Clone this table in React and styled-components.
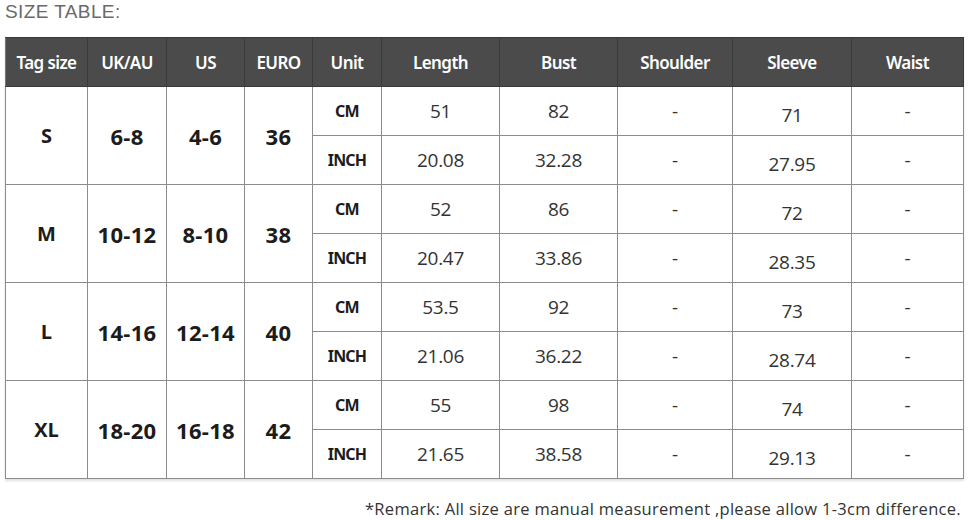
import React from "react";
import styled, { createGlobalStyle } from "styled-components";

const GlobalStyle = createGlobalStyle`
  html, body {
    margin: 0;
    padding: 0;
    background: #ffffff;
  }
`;

const Page = styled.div`
  width: 970px;
  height: 520px;
  padding: 0 7px 0 5px;
  box-sizing: border-box;
  display: flex;
  flex-direction: column;
  overflow: hidden;
`;

const Title = styled.div`
  font-family: "Liberation Sans", Arial, sans-serif;
  font-size: 19px;
  color: #6a6a6a;
  letter-spacing: 0.4px;
  height: 38px;
  line-height: 24px;
`;

const Table = styled.table`
  border-collapse: collapse;
  table-layout: fixed;
  width: 958px;
  box-shadow: 0 2px 2px rgba(0, 0, 0, 0.12);
`;

const HeadCell = styled.th`
  background: #4b4b4b;
  color: #ffffff;
  font-family: "Noto Sans", "Liberation Sans", sans-serif;
  font-weight: 600;
  font-size: 17px;
  letter-spacing: -0.6px;
  height: 48px;
  padding: 0;
  border: 1.5px solid #3a3a3a;
  border-left-color: #777;
  text-align: center;
`;

const SizeCell = styled.td`
  border: 1.5px solid #8c8c8c;
  text-align: center;
  padding: 0;
  font-family: "Open Sans", "Liberation Sans", sans-serif;
  font-weight: 700;
  font-size: ${(p) => (p.$big ? "22px" : "20px")};
  letter-spacing: ${(p) => (p.$big ? "0.3px" : "0")};
  color: #1c1c1c;
`;

const UnitCell = styled.td`
  border: 1.5px solid #8c8c8c;
  text-align: center;
  padding: 0;
  height: 48px;
  font-family: "Noto Sans", "Liberation Sans", sans-serif;
  font-weight: 700;
  font-size: 16px;
  letter-spacing: -0.8px;
  color: #1c1c1c;
`;

const ValueCell = styled.td`
  border: 1.5px solid #8c8c8c;
  text-align: center;
  padding: ${(p) => (p.$low ? "8px 0 0" : "0")};
  font-family: "Open Sans", "Liberation Sans", sans-serif;
  font-size: 19px;
  letter-spacing: -0.3px;
  color: #333333;
`;

const Remark = styled.div`
  margin-top: 18px;
  text-align: right;
  font-family: "Open Sans", "Liberation Sans", sans-serif;
  font-size: 16.5px;
  letter-spacing: 0.3px;
  color: #333333;
  padding-right: 2px;
  white-space: nowrap;
`;

const columns = [
  { label: "Tag size", w: 82 },
  { label: "UK/AU", w: 79 },
  { label: "US", w: 78 },
  { label: "EURO", w: 68 },
  { label: "Unit", w: 69 },
  { label: "Length", w: 118 },
  { label: "Bust", w: 118 },
  { label: "Shoulder", w: 115 },
  { label: "Sleeve", w: 119 },
  { label: "Waist", w: 112 },
];

const sizes = [
  { tag: "S", uk: "6-8", us: "4-6", eu: "36", cm: ["51", "82", "71"], inch: ["20.08", "32.28", "27.95"] },
  { tag: "M", uk: "10-12", us: "8-10", eu: "38", cm: ["52", "86", "72"], inch: ["20.47", "33.86", "28.35"] },
  { tag: "L", uk: "14-16", us: "12-14", eu: "40", cm: ["53.5", "92", "73"], inch: ["21.06", "36.22", "28.74"] },
  { tag: "XL", uk: "18-20", us: "16-18", eu: "42", cm: ["55", "98", "74"], inch: ["21.65", "38.58", "29.13"] },
];

const MeasureRow = ({ unit, vals }) => (
  <>
    <UnitCell>{unit}</UnitCell>
    <ValueCell>{vals[0]}</ValueCell>
    <ValueCell>{vals[1]}</ValueCell>
    <ValueCell>-</ValueCell>
    <ValueCell $low>{vals[2]}</ValueCell>
    <ValueCell>-</ValueCell>
  </>
);

export default function App() {
  return (
    <Page>
      <GlobalStyle />
      <Title>SIZE TABLE:</Title>
      <Table>
        <colgroup>
          {columns.map((c) => (
            <col key={c.label} style={{ width: c.w }} />
          ))}
        </colgroup>
        <thead>
          <tr>
            {columns.map((c) => (
              <HeadCell key={c.label}>{c.label}</HeadCell>
            ))}
          </tr>
        </thead>
        <tbody>
          {sizes.map((s) => (
            <React.Fragment key={s.tag}>
              <tr>
                <SizeCell rowSpan={2}>{s.tag}</SizeCell>
                <SizeCell rowSpan={2} $big>{s.uk}</SizeCell>
                <SizeCell rowSpan={2} $big>{s.us}</SizeCell>
                <SizeCell rowSpan={2} $big>{s.eu}</SizeCell>
                <MeasureRow unit="CM" vals={s.cm} />
              </tr>
              <tr>
                <MeasureRow unit="INCH" vals={s.inch} />
              </tr>
            </React.Fragment>
          ))}
        </tbody>
      </Table>
      <Remark>*Remark: All size are manual measurement ,please allow 1-3cm difference.</Remark>
    </Page>
  );
}
